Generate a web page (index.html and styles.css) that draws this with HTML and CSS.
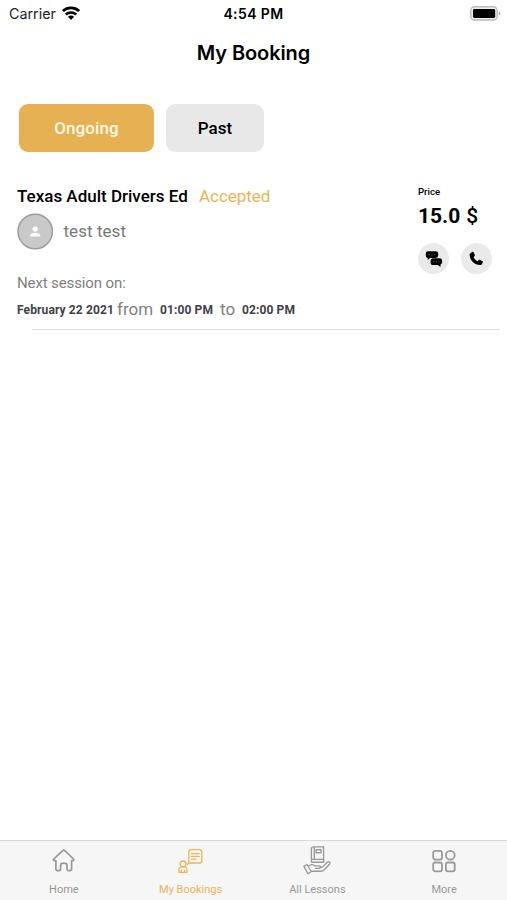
FILE: index.html
```html
<!DOCTYPE html>
<html lang="en">
<head>
<meta charset="utf-8">
<meta name="viewport" content="width=device-width, initial-scale=1">
<title>My Booking</title>
<link rel="stylesheet" href="styles.css">
</head>
<body>
<div class="app">
  <header class="status">
    <div class="carrier"><span>Carrier</span>
      <svg class="wifi" width="18" height="14" viewBox="0 0 18 14"><g fill="none" stroke="#000" stroke-width="2.7"><path d="M.9 5.1C5.4.9 12.6.9 17.1 5.1"/><path d="M3.8 8.5c2.9-2.7 7.5-2.7 10.4 0"/></g><path d="M5.9 10.8c1.8-1.6 4.4-1.6 6.2 0L9 13.9z"/></svg>
    </div>
    <div class="clock">4:54 PM</div>
    <div class="battery"><svg width="31" height="15" viewBox="0 0 31 15"><rect x=".8" y=".8" width="26.4" height="13.2" rx="3.8" fill="#eee" stroke="#bbb" stroke-width="1.4"/><rect x="3" y="3" width="22.2" height="9" rx="1.4"/><path d="M28.8 5.2c2 .8 2 3.7 0 4.5z" fill="#aaa"/></svg></div>
  </header>
  <h1 class="title">My Booking</h1>
  <nav class="tabs">
    <button class="tab tab-active">Ongoing</button>
    <button class="tab tab-past">Past</button>
  </nav>
  <main class="booking">
    <section class="details">
      <div class="course"><span class="course-name">Texas Adult Drivers Ed</span><span class="state">Accepted</span></div>
      <div class="person">
        <svg width="37" height="37" viewBox="0 0 37 37"><circle cx="18.2" cy="18.5" r="17.2" fill="#c9c9c9" stroke="#9c9c9c" stroke-width="1.5"/><circle cx="18.2" cy="16.1" r="2.6" fill="#fff"/><path d="M13.2 23.4v-1.2c0-3.4 10-3.4 10 0v1.2z" fill="#fff"/></svg>
        <span class="person-name">test test</span>
      </div>
      <div class="next">Next session on:</div>
      <div class="session"><b class="date">February 22 2021</b><span class="from">from</span><b class="start">01:00 PM</b><span class="to">to</span><b class="end">02:00 PM</b></div>
    </section>
    <aside class="side">
      <div class="price-label">Price</div>
      <div class="price"><b>15.0</b><span>$</span></div>
      <div class="actions">
        <button class="round" aria-label="Chat"><svg width="31" height="31" viewBox="0 0 31 31"><path d="M10 8.2h7.8a2.4 2.4 0 0 1 2.4 2.4v2a2.4 2.4 0 0 1-2.4 2.4h-5.6L9.7 17v-2.1a2.3 2.3 0 0 1-1.9-2.3v-2A2.3 2.3 0 0 1 10 8.2z"/><path d="M15.2 15.2h6.3a2.6 2.6 0 0 1 2.6 2.6v1.4c0 1.2-.7 2-1.6 2.3V24l-2.7-1.9h-4.6a2.6 2.6 0 0 1-2.6-2.6v-1.7c0-1.4 1.2-2.6 2.6-2.6z"/><path d="M10.9 11.6h1m1.6 0h1m1.6 0h1m-1.8 7.1h1m1.6 0h1m1.6 0h1" stroke="#777" stroke-width=".8"/></svg></button>
        <button class="round" aria-label="Call"><svg width="31" height="31" viewBox="0 0 31 31"><path d="M9.1 10.4 11.2 9c.5-.3 1-.2 1.3.3l1.4 2.6c.2.4.1.9-.2 1.2l-1.1 1.1c.8 1.9 2 3.1 4 4l1.2-1.1c.3-.3.8-.4 1.2-.2l2.5 1.4c.5.3.6.8.3 1.3l-1.4 2.1c-.2.3-.6.4-1 .4-6.2-.5-10.5-4.7-10.8-10.7 0-.4.1-.8.5-1z"/></svg></button>
      </div>
    </aside>
  </main>
  <hr class="divider">
  <footer class="bar">
    <div class="item"><svg width="32" height="30" viewBox="0 0 32 30"><path d="m6.8 13 8.9-8.4c.7-.6 1.5-.6 2.1 0l8.7 8.4c.8.8.3 1.7-.7 1.7h-1.2v8c0 1.3-.6 1.9-1.7 1.9h-1.4c-1 0-1.5-.5-1.5-1.5v-4.2c0-1-.5-1.6-1.6-1.6h-3.2c-1.1 0-1.6.6-1.6 1.6v4.2c0 1-.5 1.5-1.5 1.5h-1.5c-1.1 0-1.7-.6-1.7-1.9v-8H7.4c-1.1 0-1.5-.9-.6-1.7z"/></svg><span>Home</span></div>
    <div class="item active"><svg width="32" height="30" viewBox="0 0 32 30"><path d="M14.8 17l-1.5 1.5M14.8 17V5.9c0-1.4.8-2.2 2.2-2.2h8.6c1.4 0 2.2.8 2.2 2.2v8.9c0 1.4-.8 2.2-2.2 2.2zM17.4 7.7h7.8m-7.8 2.7h7.8m-7.8 2.7h4.8" stroke-width="1.3"/><circle cx="9" cy="17.9" r="2.9" stroke-width="1.3"/><path d="M5 26.3v-2.5c0-4.1 8-4.1 8 0v2.5zM7.4 24.2v1.8m3.2-1.8v1.8" stroke-width="1.2"/></svg><span>My Bookings</span></div>
    <div class="item"><svg width="32" height="30" viewBox="0 0 32 30"><g stroke-width="1.35"><path d="M11.2 16.2h11.4V.9h-10c-1.4 0-2.2.8-2.2 2v12.3c0 .7.3 1 .8 1zM10.8 13.4h11.8M13.3.9v12.5M15.1 3.7h5v3h-5z"/><path d="m2.9 20.4 3.2-1.9 4.2 7-3.3 2.2zM7.5 20.2c2.3-2.5 5-1.7 6.4-.4h4.3c1.8 0 1.8 2.5 0 2.5h-3.9m4.7-.8 2.9-.7 4.7-4.7c1.5-1.3 3.1.3 2.1 1.9l-5.6 6c-1 .9-2 1.2-3.5 1.2h-9"/></g></svg><span>All Lessons</span></div>
    <div class="item"><svg width="32" height="30" viewBox="0 0 32 30"><g stroke-width="1.8"><rect x="5.2" y="4.8" width="8.8" height="8.8" rx="2"/><circle cx="22.3" cy="9.2" r="4.4"/><rect x="5.2" y="16.5" width="8.8" height="8.8" rx="2"/><rect x="17.9" y="16.5" width="8.8" height="8.8" rx="2"/></g></svg><span>More</span></div>
  </footer>
</div>
</body>
</html>
```

FILE: styles.css
```css
* { box-sizing: border-box; }
body { margin: 0; background: #fff; color: #000; font-family: Roboto, "Liberation Sans", sans-serif; }
svg { display: block; flex: none; }
button { border: 0; padding: 0; font: inherit; color: inherit; }
span, b { white-space: nowrap; }
.app { height: 900px; display: flex; flex-direction: column; }
.status { height: 28px; padding: 0 6px 0 9px; display: grid; grid-template-columns: 1fr auto 1fr; align-items: center; font: 14.3px/28px Inter, sans-serif; }
.carrier { display: flex; align-items: center; gap: 6px; color: #222; }
.wifi { margin-top: -3px; }
.clock { font-weight: 600; font-size: 14px; letter-spacing: .4px; margin-right: 3px; }
.battery { display: flex; justify-content: flex-end; margin-top: -2px; }
.title { margin: 10px 0 0; height: 30px; text-align: center; font: 600 20px/30px Inter, sans-serif; letter-spacing: -.1px; }
.tabs { display: flex; gap: 12px; margin: 36px 0 0 19px; }
.tab { height: 48px; border-radius: 9px; font-size: 17px; font-weight: 500; letter-spacing: .1px; }
.tab-active { width: 135px; background: #e6b153; color: #fff8e8; }
.tab-past { width: 98px; background: #e8e8e8; }
.booking { height: 177px; padding: 33px 16px 0 17px; display: flex; justify-content: space-between; }
.course { display: flex; height: 24px; align-items: center; font-size: 17px; line-height: 22px; padding-bottom: 2px; }
.course-name { width: 182px; font-weight: 500; }
.state { color: #e9b457; letter-spacing: -.05px; }
.person { display: flex; align-items: center; gap: 9.5px; margin-top: 4px; height: 37px; }
.person-name { font-size: 17px; color: #777; padding-bottom: 2px; letter-spacing: .05px; }
.next { margin-top: 22px; height: 22px; line-height: 22px; font-size: 15px; color: #808080; letter-spacing: -.12px; }
.session { display: flex; align-items: center; height: 24px; margin-top: 4px; color: #808080; font-size: 17px; }
.session span { padding-bottom: 2px; }
.session b { color: #3f4249; font-size: 12px; font-weight: 700; letter-spacing: .12px; }
.date { width: 100px; }
.from { width: 43px; }
.start { width: 60px; }
.to { width: 22px; }
.side { width: 73px; }
.price-label { font: 500 9.6px/14px Roboto, sans-serif; }
.price { height: 34px; display: flex; align-items: center; gap: 7px; font-size: 21px; }
.price span { font-weight: 500; margin-left: -1px; }
.actions { display: flex; gap: 12px; margin-top: 10px; }
.round { width: 31px; height: 31px; border-radius: 50%; background: #eaeaea; }
.divider { width: 468px; height: 1px; margin: 0 0 0 32px; border: 0; background: #dedede; }
.bar { height: 60px; margin-top: auto; border-top: 1px solid #d8d8d8; background: #f6f6f6; display: grid; grid-template-columns: repeat(4, 1fr); padding-top: 5px; }
.item { display: flex; flex-direction: column; align-items: center; color: #999; font-size: 11px; }
.item svg { fill: none; stroke: currentColor; stroke-width: 1.7; stroke-linecap: round; stroke-linejoin: round; }
.item span { margin-top: 5px; height: 18px; line-height: 18px; padding-left: 1px; }
.active { color: #e9b457; }
```
